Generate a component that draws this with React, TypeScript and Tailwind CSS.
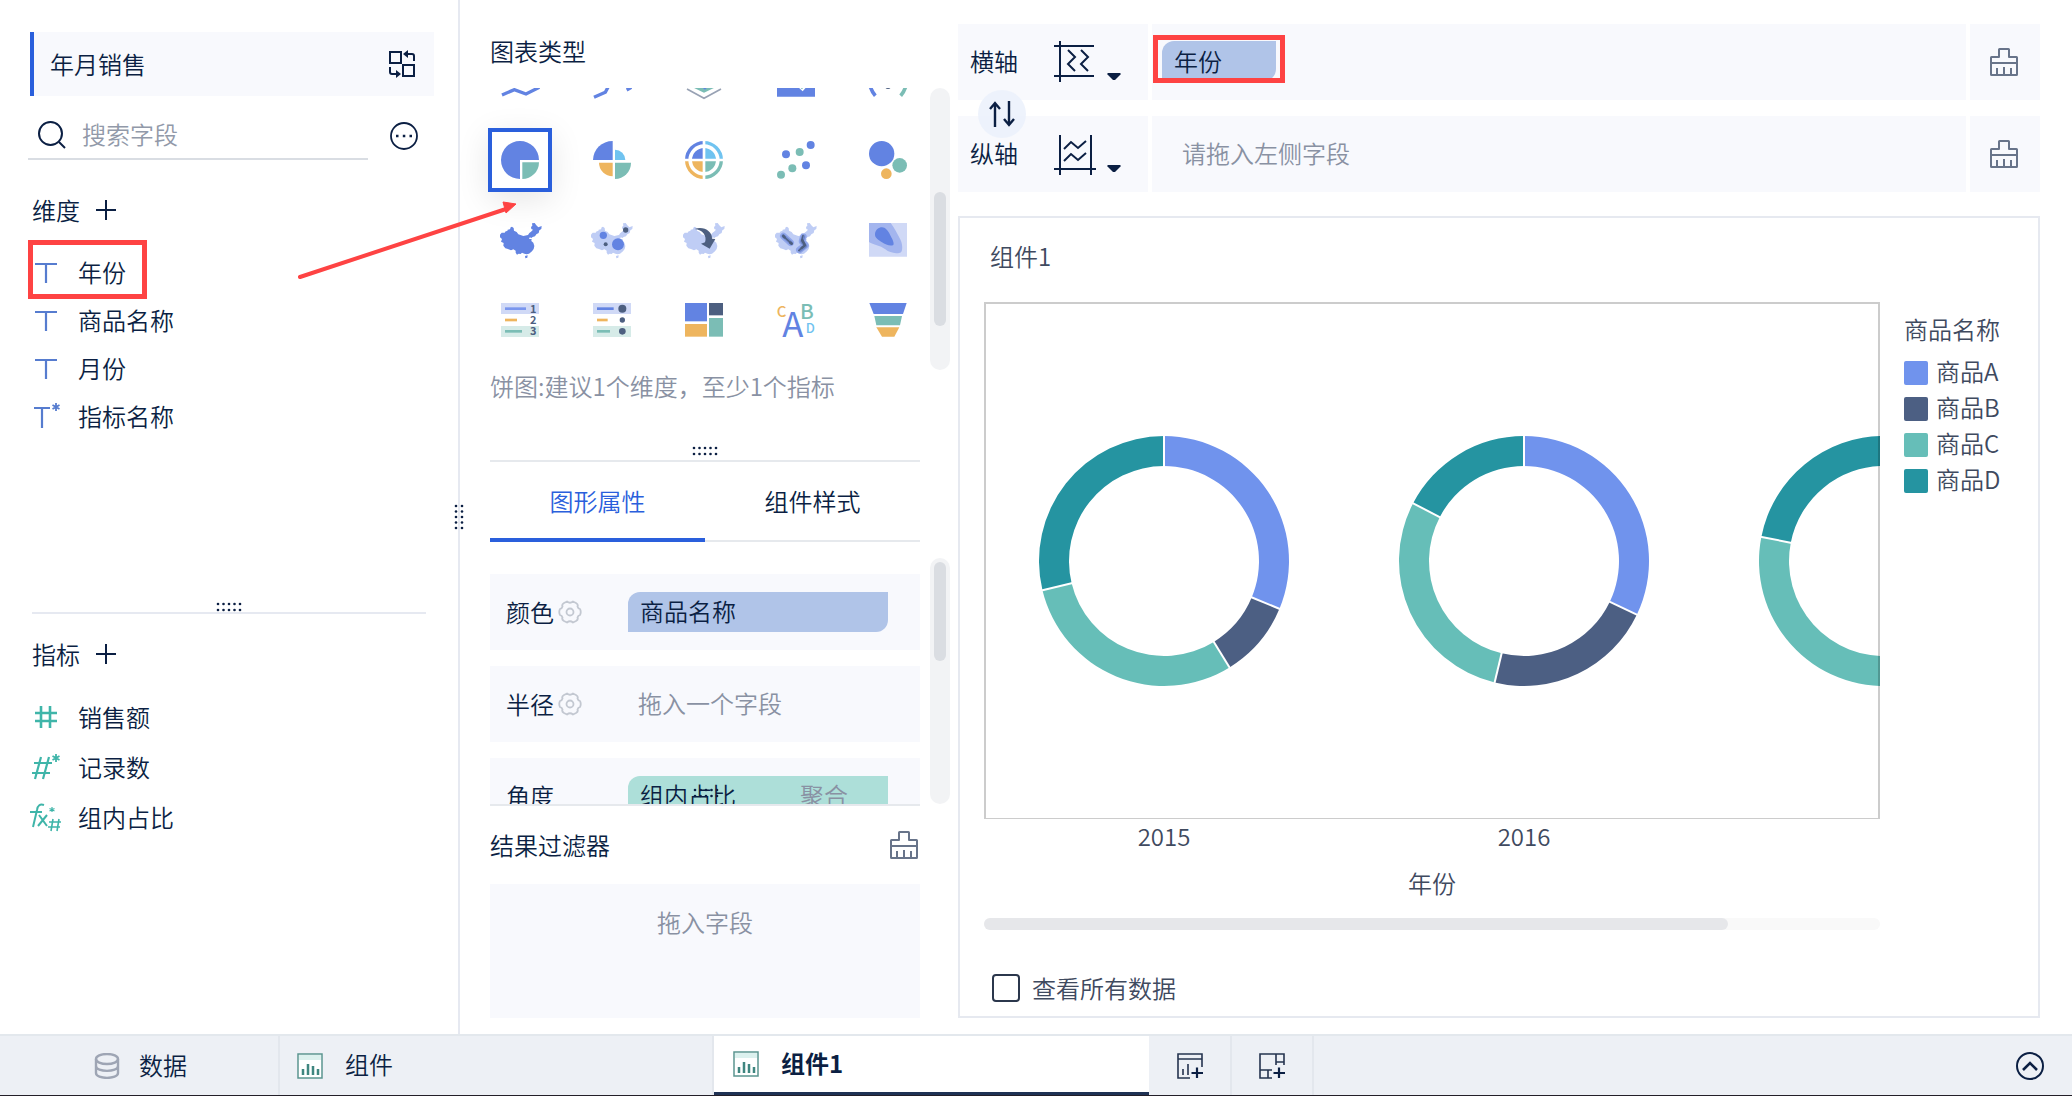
import React, { useState } from "react";

const BLUE = "#6283e2";
const TEAL = "#7bbdb5";
const ORANGE = "#eeb55e";
const SKY = "#70c3f0";
const SLATE = "#4d5f80";
const NAVY = "#0b1f43";
const MIST = "#bfcdf5";

const MAP =
  "M-60-16L-55-22L-46-22L-43-26L-38-27L-37-31L-30-32L-28-38L-24-40L-19-36L-18-28L-10-24L-5-17L10-12L24-15L28-21L33-25L39-31L34-33L33-39L37-43L36-50L44-51L49-44L55-38L65-42L64-33L58-29L56-21L49-17L45-11L38-9L33-5L30-9L27-3L35-3L34 3L40 8L43 18L41 27L36 34L27 41L20 43L13 41L6 38L2 42L-4 41L-9 44L-13 38L-13 32L-20 28L-27 31L-36 27L-44 25L-50 17L-49 9L-57 5L-54-3L-60-8ZM15 48L23 46L22 53L16 55Z";

const topIcons: { name: string; art: React.ReactNode }[] = [
  { name: "折线图", art: <path d="M-54 45L-17 29L18 42L58 22" fill="none" stroke={BLUE} strokeWidth="10" /> },
  { name: "范围折线图", art: <path d="M-54 52L-20 37L-6 10M44 30L58 22" fill="none" stroke={BLUE} strokeWidth="10" /> },
  {
    name: "雷达图",
    art: (
      <>
        <path d="M-38 20H38L0 38Z" fill={TEAL} />
        <path d="M-8 20H12L3 29Z" fill={BLUE} />
        <path d="M-51 27L0 55L51 27" fill="none" stroke="#98a2b4" strokeWidth="5" />
      </>
    ),
  },
  {
    name: "面积图",
    art: (
      <>
        <path d="M-57 20H57V50H-57Z" fill={BLUE} />
        <path d="M5 20H32L20 34Z" fill="#fff" />
        <path d="M10 20H24L18 28Z" fill={TEAL} />
      </>
    ),
  },
  {
    name: "仪表盘",
    art: (
      <>
        <path d="M-53 20Q-48 36-38 47" fill="none" stroke={BLUE} strokeWidth="11" />
        <path d="M53 20Q48 36 38 47" fill="none" stroke={TEAL} strokeWidth="11" />
        <circle cx="0" cy="18" r="9" fill={SLATE} />
      </>
    ),
  },
];

const icons: { name: string; art: React.ReactNode }[] = [
  {
    name: "饼图",
    art: (
      <>
        <path d="M0 0H57A57 57 0 1 0 0 57Z" fill={BLUE} />
        <path d="M7 7H57A50 50 0 0 1 7 57Z" fill={TEAL} />
      </>
    ),
  },
  {
    name: "玫瑰图",
    art: (
      <>
        <path d="M2 0V-57A59 57 0 0 0-57 0Z" fill={BLUE} />
        <path d="M9 0V-31A31 31 0 0 1 40 0Z" fill={SKY} />
        <path d="M2 8H-39A41 41 0 0 0 2 49Z" fill={ORANGE} />
        <path d="M9 8H57A48 49 0 0 1 9 57Z" fill={TEAL} />
      </>
    ),
  },
  {
    name: "多层饼图",
    art: (
      <>
        <path d="M0 0V-36A36 36 0 0 0-36 0Z" fill={BLUE} />
        <path d="M0 0V-36A36 36 0 0 1 36 0Z" fill={SKY} />
        <path d="M0 0V36A36 36 0 0 1-36 0Z" fill={ORANGE} />
        <path d="M0 0V36A36 36 0 0 0 36 0Z" fill={TEAL} />
        <g fill="none" strokeWidth="10">
          <path d="M0-52A52 52 0 0 0-52 0" stroke={BLUE} />
          <path d="M0-52A52 52 0 0 1 52 0" stroke={SKY} />
          <path d="M0 52A52 52 0 0 1-52 0" stroke={ORANGE} />
          <path d="M0 52A52 52 0 0 0 52 0" stroke={TEAL} />
        </g>
        <path d="M0-60V60M-60 0H60" stroke="#fff" strokeWidth="8" />
      </>
    ),
  },
  {
    name: "散点图",
    art: (
      <>
        <g fill={BLUE}>
          <circle cx="-30" cy="-17" r="12" />
          <circle cx="44" cy="-45" r="12" />
          <circle cx="30" cy="16" r="12" />
        </g>
        <g fill={TEAL}>
          <circle cx="11" cy="-24" r="12" />
          <circle cx="-11" cy="25" r="12" />
          <circle cx="-45" cy="44" r="12" />
        </g>
      </>
    ),
  },
  {
    name: "聚合气泡图",
    art: (
      <>
        <circle cx="-19" cy="-19" r="38" fill={BLUE} />
        <circle cx="35" cy="16" r="22" fill={TEAL} />
        <circle cx="-5" cy="41" r="16" fill={ORANGE} />
      </>
    ),
  },
  { name: "区域地图", art: <path d={MAP} fill={BLUE} /> },
  {
    name: "点地图",
    art: (
      <>
        <path d={MAP} transform="translate(-3 0)" fill={MIST} />
        <circle cx="-26" cy="-14" r="11" fill={BLUE} />
        <circle cx="18" cy="13" r="18" fill={BLUE} />
        <circle cx="41" cy="-30" r="8" fill={SLATE} />
        <circle cx="-19" cy="13" r="6" fill={SLATE} />
      </>
    ),
  },
  {
    name: "流向地图",
    art: (
      <>
        <path d={MAP} transform="translate(-3 0)" fill={MIST} />
        <path d="M-28-33C-2-43 26-26 24-4L34-3L17 26L-9 11L3 7C10-12-4-31-28-33Z" fill={SLATE} />
      </>
    ),
  },
  {
    name: "热力地图",
    art: (
      <>
        <path d={MAP} transform="translate(-3 0)" fill={MIST} />
        <g fill="none" strokeLinecap="round" strokeLinejoin="round">
          <path d="M-38-12L-16 8M22-10L18 4L28 16L10 30" stroke="#90a6ea" strokeWidth="20" />
          <path d="M-38-12L-16 8M22-10L18 4L28 18L12 30" stroke="#6f87cb" strokeWidth="11" />
          <path d="M-38-12L-34-8M-17 8L-13 11" stroke={SLATE} strokeWidth="8" />
          <path d="M-36-10L-13 11M21-14L17 2L26 16L8 32" stroke={SLATE} strokeWidth="4" />
          <path d="M19 0L27 16L17 24" stroke={SLATE} strokeWidth="7" />
        </g>
      </>
    ),
  },
  {
    name: "热力区域图",
    art: (
      <>
        <path d="M-57-51H57V50H-57Z" fill="#d0d9f6" />
        <path d="M-57-51H8C20-36 28-18 36-4C44 10 46 36 36 38C22 42 4 38-8 28C-24 16-44 14-57 6Z" fill="#a3b5ee" />
        <path d="M-18-38C-8-38 0-28 6-16C11-6 20 8 16 15C8 20-8 14-18 7C-28 0-40-6-39-18C-38-30-28-38-18-38Z" fill={BLUE} />
      </>
    ),
  },
  {
    name: "明细表",
    art: (
      <>
        <path d="M-57-51H57V-18H-57Z" fill="#d0d9f6" />
        <path d="M-57 18H57V51H-57Z" fill="#d6ebe8" />
        <path d="M-45-34H18" stroke="#7a96ee" strokeWidth="8" />
        <path d="M-45 0H-9" stroke={ORANGE} strokeWidth="8" />
        <path d="M-45 34H6" stroke={TEAL} strokeWidth="8" />
        <g fill={SLATE} fontSize="33" fontWeight="700" textAnchor="middle">
          <text x="40" y="-22">1</text>
          <text x="40" y="12">2</text>
          <text x="40" y="46">3</text>
        </g>
      </>
    ),
  },
  {
    name: "颜色表格",
    art: (
      <>
        <path d="M-57-51H57V-18H-57Z" fill="#d0d9f6" />
        <path d="M-57 18H57V51H-57Z" fill="#d6ebe8" />
        <path d="M-45-34H5" stroke={BLUE} strokeWidth="8" />
        <path d="M-45 0H-13" stroke={ORANGE} strokeWidth="8" />
        <path d="M-45 34H-6" stroke={TEAL} strokeWidth="8" />
        <circle cx="31" cy="-34" r="12" fill={SLATE} />
        <circle cx="31" cy="0" r="8" fill={SLATE} />
        <circle cx="31" cy="34" r="10" fill={SLATE} />
      </>
    ),
  },
  {
    name: "矩形树图",
    art: (
      <>
        <path d="M-57-51H9V4H-57Z" fill={BLUE} />
        <path d="M-57 12H9V50H-57Z" fill={ORANGE} />
        <path d="M15-51H57V-14H15Z" fill={SLATE} />
        <path d="M15-6H57V50H15Z" fill={TEAL} />
      </>
    ),
  },
  {
    name: "词云",
    art: (
      <g fontWeight="500" textAnchor="middle">
        <text x="-43" y="-8" fontSize="45" fill={ORANGE}>C</text>
        <text x="-10" y="50" fontSize="104" fontWeight="400" fill={BLUE}>A</text>
        <text x="33" y="-4" fontSize="62" fill={TEAL}>B</text>
        <text x="43" y="38" fontSize="39" fill={SKY}>D</text>
      </g>
    ),
  },
  {
    name: "漏斗图",
    art: (
      <>
        <path d="M-56-51H56L45-18H-43Z" fill={BLUE} />
        <path d="M-41-12H42L36 16H-35Z" fill={TEAL} />
        <path d="M-35 22H34L19 50H-18Z" fill={ORANGE} />
      </>
    ),
  },
];

const Dots = () => (
  <svg viewBox="0 0 26 10" className="h-[10px] w-[26px]" fill={NAVY} aria-hidden="true">
    {[2, 7.5, 13, 18.5, 24].map((x) => (
      <g key={x}>
        <circle cx={x} cy="2" r="1.3" />
        <circle cx={x} cy="8" r="1.3" />
      </g>
    ))}
  </svg>
);

const Brush = () => (
  <svg viewBox="0 0 28 28" className="size-7" fill="none" stroke="#68748a" strokeWidth="2" strokeLinejoin="round" aria-hidden="true">
    <path d="M9 9V1.500Q9 1 9.500 1H18.500Q19 1 19 1.500V9H26.500Q27 9 27 9.500V26.500Q27 27 26.500 27H1.500Q1 27 1 26.500V9.500Q1 9 1.500 9ZM1 15H27M7 20V27M14 19V27M21 20V27" />
  </svg>
);

const Gear = () => (
  <svg viewBox="0 0 24 24" className="size-6" fill="none" stroke="#c3c8d1" strokeWidth="1.800" strokeLinejoin="round" aria-hidden="true">
    <path d="M9 1.500Q12 4 15 1.500L18 3Q20.500 4.500 19.500 6.500Q20 8.500 22 9Q23.500 12 22 15Q20 15.500 19.500 17.500Q20.500 19.500 18 21L15 22.500Q12 20 9 22.500L6 21Q3.500 19.500 4.500 17.500Q4 15.500 2 15Q.5 12 2 9Q4 8.500 4.500 6.500Q3.500 4.500 6 3Z" />
    <circle cx="12" cy="12" r="3.500" />
  </svg>
);

const Plus = () => (
  <svg viewBox="0 0 20 20" className="size-5" fill="none" stroke={NAVY} strokeWidth="2" aria-hidden="true">
    <path d="M0 10H20M10 0V20" />
  </svg>
);

const DimIcon = ({ star }: { star?: boolean }) => (
  <svg viewBox="0 0 32 32" className="size-8" fill="none" stroke="#567ccf" strokeWidth="2.200" aria-hidden="true">
    {star ? (
      <>
        <path d="M4 8H20M12 8V28" />
        <path d="M26 3V11M22.500 5L29.500 9M29.500 5L22.500 9" strokeWidth="1.800" />
      </>
    ) : (
      <path d="M5 8H27M16 8V27" />
    )}
  </svg>
);

const MetricIcon = ({ kind }: { kind: string }) => (
  <svg viewBox="0 0 32 32" className="size-8" fill="none" stroke="#3fb5a9" strokeWidth="2.200" aria-hidden="true">
    {kind === "num" && <path d="M5 12H27M5 20H27M11 5V27M20 5V27" strokeWidth="2.600" />}
    {kind === "count" && (
      <>
        <path d="M4 12H22M2 22H20M11 6L5 28M19 6L13 28" />
        <path d="M26 3V11M22.500 5L29.500 9M29.500 5L22.500 9" strokeWidth="1.800" />
      </>
    )}
    {kind === "calc" && (
      <>
        <path d="M14 4Q8 2 7 9L3 26M0 11H12M9 14L17 25M17 14L8 25" strokeWidth="2" />
        <path d="M22 6V11M19.500 7.500L24.500 10M24.500 7.500L19.500 10" strokeWidth="1.200" />
        <path d="M19 21H31M18 26H30M23 18L21 30M29 18L27 30" strokeWidth="1.600" />
      </>
    )}
  </svg>
);

const ChartTabIcon = () => (
  <svg viewBox="0 0 26 26" className="size-[26px]" aria-hidden="true">
    <path d="M1 1H25V25H1Z" fill="#fff" stroke="#5b9590" strokeWidth="1.500" />
    <path d="M2 2H24V7H2Z" fill="#dcf1ee" />
    <path d="M6 22V16M11 22V11M16 22V13M21 22V16" stroke="#3f8680" strokeWidth="2.500" />
  </svg>
);

const slices = ["#7093ed", "#4c5f83", "#66beb8", "#2594a1"];
const facets = [
  { year: "2015", ends: [112.5, 148.4, 256.5, 360] },
  { year: "2016", ends: [115.4, 193.6, 297.5, 360] },
  { year: "2017", ends: [120, 175, 281.1, 360] },
];

const pt = (deg: number, r: number) => {
  const a = (deg * Math.PI) / 180;
  return `${(r * Math.sin(a)).toFixed(2)} ${(-r * Math.cos(a)).toFixed(2)}`;
};

const Donut = ({ ends }: { ends: number[] }) => (
  <svg viewBox="-126 -126 252 252" className="size-[252px]" role="img" aria-label="环形图">
    {ends.map((end, i) => {
      const start = i ? ends[i - 1] : 0;
      const large = end - start > 180 ? 1 : 0;
      return (
        <path
          key={i}
          d={`M${pt(start, 125)}A125 125 0 ${large} 1 ${pt(end, 125)}L${pt(end, 95)}A95 95 0 ${large} 0 ${pt(start, 95)}Z`}
          fill={slices[i]}
        />
      );
    })}
    {ends.map((end) => (
      <path key={end} d={`M${pt(end, 94)}L${pt(end, 126)}`} stroke="#fff" strokeWidth="2" />
    ))}
  </svg>
);

const Field = ({ icon, name, marked, tall }: { icon: React.ReactNode; name: string; marked?: boolean; tall?: boolean }) => (
  <li className={tall ? "flex h-[50px] items-center" : "flex h-12 items-center"}>
    <button className="relative flex h-full items-center gap-4 pl-[30px]">
      {marked && <span className="absolute -top-2 left-7 h-[59px] w-[119px] border-5 border-[#fe4343]" />}
      {icon}
      <span>{name}</span>
    </button>
  </li>
);

const Heading = ({ text }: { text: string }) => (
  <div className="flex h-8 items-center gap-4 pl-8">
    <h2>{text}</h2>
    <button aria-label={"添加" + text}>
      <Plus />
    </button>
  </div>
);

const Caret = () => (
  <svg viewBox="0 0 14 8" className="mt-[30px] h-2 w-[14px]" fill={NAVY} aria-hidden="true">
    <path d="M1 0H13L14 1L8 7H6L0 1Z" />
  </svg>
);

function AxisRow({ label, icon, children }: { label: string; icon: React.ReactNode; children: React.ReactNode }) {
  return (
    <div className="flex h-[76px] gap-1">
      <div className="flex w-[190px] items-center bg-[#f8f9fd] pl-3">
        <span className="w-[84px] pb-[2px]">{label}</span>
        <button className="flex items-center gap-[11px]" aria-label={label + "类型"}>
          {icon}
          <Caret />
        </button>
      </div>
      <div className="flex flex-1 items-center bg-[#f8f9fd] pb-[2px]">{children}</div>
      <button className="flex w-[70px] items-center justify-center bg-[#f8f9fd] pr-[2px]" aria-label={"清空" + label}>
        <Brush />
      </button>
    </div>
  );
}

export default function App() {
  const [picked, setPicked] = useState("饼图");
  const [all, setAll] = useState(false);
  return (
    <div className="relative flex h-screen flex-col overflow-hidden bg-white font-['Noto_Sans_CJK_SC','Noto_Sans',sans-serif] text-2xl font-[350] leading-8 text-[#0b1f43]">
      <main className="flex min-h-0 flex-1">
        <aside className="relative w-[460px] shrink-0 border-r-2 border-[#e6e9f1] pt-8">
          <div className="mr-6 ml-[30px] flex h-16 items-center justify-between border-l-4 border-[#2a5fdc] bg-[#f8f9fd] pr-[18px] pl-4">
            <h1>年月销售</h1>
            <button aria-label="切换数据">
              <svg viewBox="0 0 28 28" className="size-7" fill="none" stroke={NAVY} strokeWidth="2" aria-hidden="true">
                <path d="M2 2H13V13H2ZM15 15H26V26H15ZM26 11V6Q26 4 24 4H19M2 17V22Q2 24 4 24H8" />
                <path d="M20 0V8L15 4ZM8 20V28L13 24Z" fill={NAVY} stroke="none" />
              </svg>
            </button>
          </div>
          <div className="mt-4 flex items-center gap-[22px] pl-7">
            <label className="flex h-12 w-[340px] items-center gap-4 border-b-2 border-[#d9dde3] pl-[10px]">
              <svg viewBox="0 0 28 28" className="size-7 shrink-0" fill="none" stroke={NAVY} strokeWidth="2" aria-hidden="true">
                <circle cx="12.500" cy="12.500" r="11.500" />
                <path d="M21 21L27 27" />
              </svg>
              <input aria-label="搜索字段" placeholder="搜索字段" className="w-full pb-[2px] outline-none placeholder:text-[#9199a9]" />
            </label>
            <button aria-label="更多">
              <svg viewBox="0 0 28 28" className="size-7" fill="none" stroke={NAVY} strokeWidth="1.800" aria-hidden="true">
                <circle cx="14" cy="14" r="13" />
                <path d="M6 14H8.500M12.800 14H15.300M19.500 14H22" strokeWidth="2.500" />
              </svg>
            </button>
          </div>
          <section className="flex h-[452px] flex-col pt-[34px]">
            <Heading text="维度" />
            <ul className="mt-[22px]">
              <Field icon={<DimIcon />} name="年份" marked />
              <Field icon={<DimIcon />} name="商品名称" />
              <Field icon={<DimIcon />} name="月份" />
              <Field icon={<DimIcon star />} name="指标名称" />
            </ul>
            <div className="mx-8 mt-auto flex justify-center">
              <Dots />
            </div>
          </section>
          <section>
            <hr className="mx-8 border-t-2 border-[#e6e9f1]" />
            <div className="pt-6">
              <Heading text="指标" />
            </div>
            <ul className="mt-[22px]">
              <Field icon={<MetricIcon kind="num" />} name="销售额" tall />
              <Field icon={<MetricIcon kind="count" />} name="记录数" tall />
              <Field icon={<MetricIcon kind="calc" />} name="组内占比" tall />
            </ul>
          </section>
          <span className="absolute inset-y-0 -right-[14px] flex rotate-90 items-center pr-0">
            <Dots />
          </span>
        </aside>

        <section className="flex w-[498px] shrink-0 flex-col pt-[35px] pr-2 pb-4 pl-[30px]">
          <h2>图表类型</h2>
          <div className="mt-[21px] -ml-[2px] flex h-[282px] gap-[10px]">
            <div className="w-[432px]">
              <div className="flex h-6 justify-between">
                {topIcons.map((t) => (
                  <button key={t.name} aria-label={t.name} title={t.name}>
                    <svg viewBox="-96 24 192 72" className="h-6 w-16">
                      {t.art}
                    </svg>
                  </button>
                ))}
              </div>
              <div className="mt-4 grid grid-cols-[repeat(5,64px)] justify-between gap-y-4">
                {icons.map((t) => (
                  <button
                    key={t.name}
                    aria-label={t.name}
                    title={t.name}
                    onClick={() => setPicked(t.name)}
                    className={
                      picked === t.name
                        ? "size-16 border-4 border-[#2a5fdc] bg-white shadow-[0_8px_32px_rgba(0,0,0,0.1)]"
                        : "size-16 border-4 border-transparent"
                    }
                  >
                    <svg viewBox="-84 -84 168 168" className="size-14">
                      {t.art}
                    </svg>
                  </button>
                ))}
              </div>
            </div>
            <div className="w-5 rounded-full bg-[#f2f3f5] pt-[104px]">
              <div className="mx-auto h-[134px] w-3 rounded-full bg-[#dadde2]" />
            </div>
          </div>
          <p className="text-[#8991a3]">饼图:建议1个维度，至少1个指标</p>
          <div className="mt-11 mr-[30px] flex h-4 justify-center border-b-2 border-[#e6e9ed]">
            <Dots />
          </div>
          <div role="tablist" className="mr-[30px] flex h-20 border-b-2 border-[#e6e9ed]">
            <button role="tab" aria-selected="true" className="-mb-[2px] flex-1 border-b-4 border-[#2a5fdc] pt-[2px] text-[#2a5fdc]">
              图形属性
            </button>
            <button role="tab" aria-selected="false" className="flex-1">
              组件样式
            </button>
          </div>
          <div className="flex h-[262px] gap-[10px] overflow-hidden">
            <div className="relative flex h-[264px] w-[430px] flex-col gap-4 overflow-hidden border-b-2 border-[#e6e9ed] pt-8">
              <div className="flex h-[76px] shrink-0 items-center bg-[#f8f9fd] pl-4">
                <span>颜色</span>
                <button aria-label="颜色设置" className="ml-1 w-[70px]"><Gear /></button>
                <button className="h-10 w-[260px] rounded-tl-xl rounded-br-xl bg-[#b0c4e8] px-3 pb-[2px] text-left">商品名称</button>
              </div>
              <div className="flex h-[76px] shrink-0 items-center bg-[#f8f9fd] pl-4">
                <span>半径</span>
                <button aria-label="半径设置" className="ml-1 w-[80px]"><Gear /></button>
                <span className="pb-[2px] text-[#8991a3]">拖入一个字段</span>
              </div>
              <div className="flex h-[76px] shrink-0 items-center bg-[#f8f9fd] pl-4">
                <span className="w-[122px]">角度</span>
                <button className="flex h-10 w-[260px] items-center justify-between rounded-tl-xl rounded-br-xl bg-[#addfd9] pr-10 pb-[2px] pl-3">
                  <span>组内占比</span>
                  <span className="text-[#8991a3]">聚合</span>
                </button>
              </div>
              <span className="absolute bottom-[6px] left-1/2 -ml-3">
                <Dots />
              </span>
            </div>
            <div className="mt-4 w-5 rounded-full bg-[#f2f3f5] pt-1">
              <div className="mx-auto h-[99px] w-3 rounded-full bg-[#dadde2]" />
            </div>
          </div>
          <div className="mr-[30px] flex h-20 shrink-0 items-center justify-between border-t-2 border-[#e6e9ed] pr-[2px]">
            <h2>结果过滤器</h2>
            <button aria-label="清空过滤器">
              <Brush />
            </button>
          </div>
          <div className="mr-[30px] flex-1 bg-[#f8f9fd] pt-[22px] text-center text-[#8991a3]">拖入字段</div>
        </section>

        <section className="flex min-w-0 flex-1 flex-col pt-6 pr-8 pb-4">
          <div className="relative flex flex-col gap-4">
            <AxisRow
              label="横轴"
              icon={
                <svg viewBox="0 0 42 42" className="size-[42px]" fill="none" stroke={NAVY} strokeWidth="2" aria-hidden="true">
                  <path d="M0 6H40M0 36H40M6 0V42M14 10L21 17L14 24L21 31M27 10L34 17L27 24L34 31" transform="translate(0 -1)" />
                </svg>
              }
            >
              <div className="relative ml-[10px]">
                <button className="flex h-10 w-[114px] items-center rounded-tl-xl rounded-br-xl bg-[#b0c4e8] pl-3">年份</button>
                <span className="absolute -top-[6px] -left-[9px] h-12 w-[132px] border-5 border-[#fe4343]" />
              </div>
            </AxisRow>
            <AxisRow
              label="纵轴"
              icon={
                <svg viewBox="0 0 42 42" className="size-[42px]" fill="none" stroke={NAVY} strokeWidth="2" aria-hidden="true">
                  <path d="M6 1V41M37 1V41M0 35H42M10 15L17 8L24 14L32 7M10 27L17 20L24 26L32 19" transform="translate(0 1)" />
                </svg>
              }
            >
              <span className="pl-[30px] text-[#8991a3]">请拖入左侧字段</span>
            </AxisRow>
            <button aria-label="交换横纵轴" className="absolute top-[66px] left-5 flex size-12 items-center justify-center rounded-full bg-[#eaf0fb]/80">
              <svg viewBox="0 0 26 26" className="size-[26px]" fill="none" stroke={NAVY} strokeWidth="2.400" aria-hidden="true">
                <path d="M6 26V2M1 8L6 2L11 8M20 0V24M15 18L20 24L25 18" />
              </svg>
            </button>
          </div>

          <div className="mt-6 flex min-h-0 flex-1 flex-col border-2 border-[#e6e9f0] px-6 text-[#3f4a5f]">
            <h2 className="mt-[22px] ml-[6px]">组件1</h2>
            <div className="mt-[30px] flex min-h-0 flex-1 gap-6">
              <div className="flex min-w-0 flex-1 flex-col">
                <div className="relative flex min-h-0 flex-1 items-center overflow-hidden">
                  {facets.map((f) => (
                    <div key={f.year} className="flex w-[360px] shrink-0 justify-center">
                      <Donut ends={f.ends} />
                    </div>
                  ))}
                  <span className="absolute inset-0 border-2 border-b border-black/20" />
                </div>
                <div className="flex h-9 items-center overflow-hidden pb-[2px] text-center">
                  {facets.slice(0, 2).map((f) => (
                    <span key={f.year} className="w-[360px] shrink-0">
                      {f.year}
                    </span>
                  ))}
                </div>
                <p className="mt-3 text-center">年份</p>
                <div className="mt-[19px] h-3 rounded-md bg-[#f9f9f9]">
                  <div className="h-3 w-[83%] rounded-md bg-[#e6e7ea]" />
                </div>
              </div>
              <div className="w-[110px] pt-[11px]">
                <h3>商品名称</h3>
                <ul className="mt-2">
                  {["商品A", "商品B", "商品C", "商品D"].map((n, i) => (
                    <li key={n} className="flex h-9 items-center gap-2 whitespace-nowrap">
                      <span className="mt-1 size-6 shrink-0 rounded-xs" style={{ backgroundColor: slices[i] }} />
                      {n}
                    </li>
                  ))}
                </ul>
              </div>
            </div>
            <label className="mt-[42px] mb-3 flex items-center gap-3 pl-2">
              <input
                type="checkbox"
                checked={all}
                onChange={(e) => setAll(e.target.checked)}
                className="size-7 appearance-none rounded-sm border-2 border-[#2b374c] checked:bg-[#2a5fdc]"
              />
              查看所有数据
            </label>
          </div>
        </section>
      </main>

      <footer className="flex h-[62px] shrink-0 border-t-2 border-b border-t-[#e3e8ed] border-b-[#231f28] bg-[#edf0f5]">
        <button className="flex w-[280px] items-center gap-[19px] border-r-2 border-[#e3e7ed] pl-[94px]">
          <svg viewBox="0 0 26 26" className="size-[26px]" fill="none" stroke="#9ea5b4" strokeWidth="2.400" aria-hidden="true">
            <ellipse cx="13" cy="6" rx="11" ry="5" />
            <path d="M2 6V20C2 26.500 24 26.500 24 20V6M2 13C2 19.500 24 19.500 24 13" />
          </svg>
          <span className="pb-[2px]">数据</span>
        </button>
        <button className="flex w-[434px] items-center gap-[22px] border-r-2 border-[#e3e7ed] pl-[17px]">
          <ChartTabIcon />
          <span className="pb-1">组件</span>
        </button>
        <button className="flex w-[435px] items-center gap-[22px] border-b-3 border-[#1f3254] bg-white pl-[19px] font-bold">
          <ChartTabIcon />
          <span className="pb-[2px]">组件1</span>
        </button>
        <button aria-label="添加组件" className="flex w-[83px] items-center justify-center border-r-2 border-[#e3e7ed]">
          <svg viewBox="0 0 26 26" className="size-[26px]" fill="none" stroke="#25344f" strokeWidth="1.600" aria-hidden="true">
            <path d="M13 25H1V1H25V14M1 6H25M6 22V16M11 22V11" />
            <path d="M20 14.500V25M14.500 20H26" stroke={NAVY} strokeWidth="2.200" />
          </svg>
        </button>
        <button aria-label="添加仪表板" className="flex w-[82px] items-center justify-center border-r-2 border-[#e3e7ed]">
          <svg viewBox="0 0 26 26" className="size-[26px]" fill="none" stroke="#25344f" strokeWidth="1.600" aria-hidden="true">
            <path d="M13 25H1V1H25V12M1 17H13M9 17V25M17 1V12M17 9H25" />
            <path d="M20 14.500V25M14.500 20H26" stroke={NAVY} strokeWidth="2.200" />
          </svg>
        </button>
        <button aria-label="展开" className="mr-7 ml-auto">
          <svg viewBox="0 0 28 28" className="size-7" fill="none" stroke={NAVY} strokeWidth="2" aria-hidden="true">
            <circle cx="14" cy="14" r="13" />
            <path d="M7 18L14 11L21 18" strokeWidth="2.600" />
          </svg>
        </button>
      </footer>

      <svg viewBox="0 0 220 84" className="pointer-events-none absolute top-[200px] left-[298px] h-[84px] w-[220px]" aria-hidden="true">
        <path d="M2 77L208 9" stroke="#fe4343" strokeWidth="4" strokeLinecap="round" />
        <path d="M205 2L218 4L208 13Z" fill="#fe4343" stroke="#fe4343" />
      </svg>
    </div>
  );
}
